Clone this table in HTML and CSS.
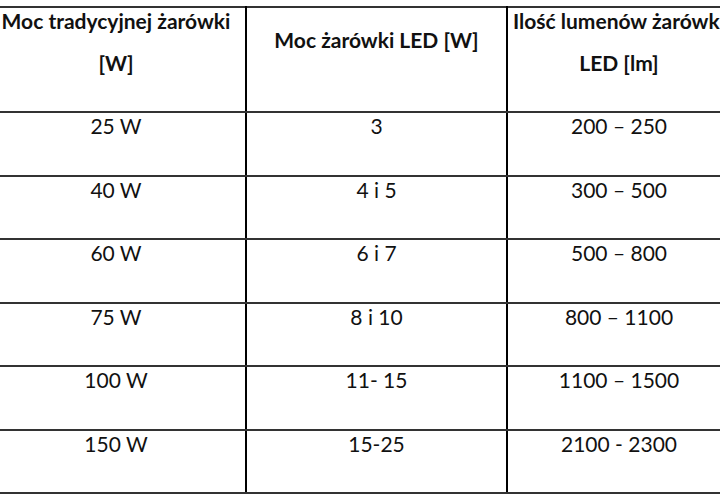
FILE: index.html
```html
<!DOCTYPE html>
<html lang="pl">
<head>
<meta charset="utf-8">
<title>Tabela żarówek</title>
<link rel="stylesheet" href="styles.css">
</head>
<body>
<table class="tbl">
  <colgroup>
    <col class="c1"><col class="c2"><col class="c3">
  </colgroup>
  <thead>
    <tr class="head">
      <th><span class="ln">Moc tradycyjnej żarówki</span><span class="ln ln2">[W]</span></th>
      <th class="single"><span class="ln">Moc żarówki LED [W]</span></th>
      <th><span class="ln">Ilość lumenów żarówki</span><span class="ln ln2">LED [lm]</span></th>
    </tr>
  </thead>
  <tbody>
    <tr class="r64"><td>25 W</td><td>3</td><td>200 – 250</td></tr>
    <tr class="r63"><td>40 W</td><td>4 i 5</td><td>300 – 500</td></tr>
    <tr class="r64"><td>60 W</td><td>6 i 7</td><td>500 – 800</td></tr>
    <tr class="r63"><td>75 W</td><td>8 i 10</td><td>800 – 1100</td></tr>
    <tr class="r64"><td>100 W</td><td>11- 15</td><td>1100 – 1500</td></tr>
    <tr class="r63"><td>150 W</td><td>15-25</td><td>2100 - 2300</td></tr>
  </tbody>
</table>
</body>
</html>
```
FILE: styles.css
```css
html, body {
  margin: 0;
  padding: 0;
  background: #ffffff;
  overflow: hidden;
  width: 720px;
  height: 500px;
}
body {
  font-family: Lato, "Open Sans", "Liberation Sans", sans-serif;
  color: #111111;
}
.tbl {
  border-collapse: collapse;
  table-layout: fixed;
  width: 745px;
  margin-left: -15px;
  margin-top: 6px;
}
.c1 { width: 260px; }
.c2 { width: 261px; }
.c3 { width: 224px; }
.tbl th, .tbl td {
  border-top: 2px solid #333333;
  border-bottom: 2px solid #333333;
  border-left: 2px solid #000000;
  border-right: 2px solid #000000;
  text-align: center;
  vertical-align: top;
  padding: 0;
  font-size: 21px;
}
.head {
  height: 105px;
}
.tbl th {
  font-weight: 700;
  line-height: 26px;
}
.ln {
  display: block;
  white-space: nowrap;
}
.ln2 {
  margin-top: 16px;
}
.tbl th.single {
  padding-top: 19px;
}
.tbl td {
  font-weight: 400;
  line-height: 25px;
}
.r64 { height: 64px; }
.r63 { height: 63px; }
```
